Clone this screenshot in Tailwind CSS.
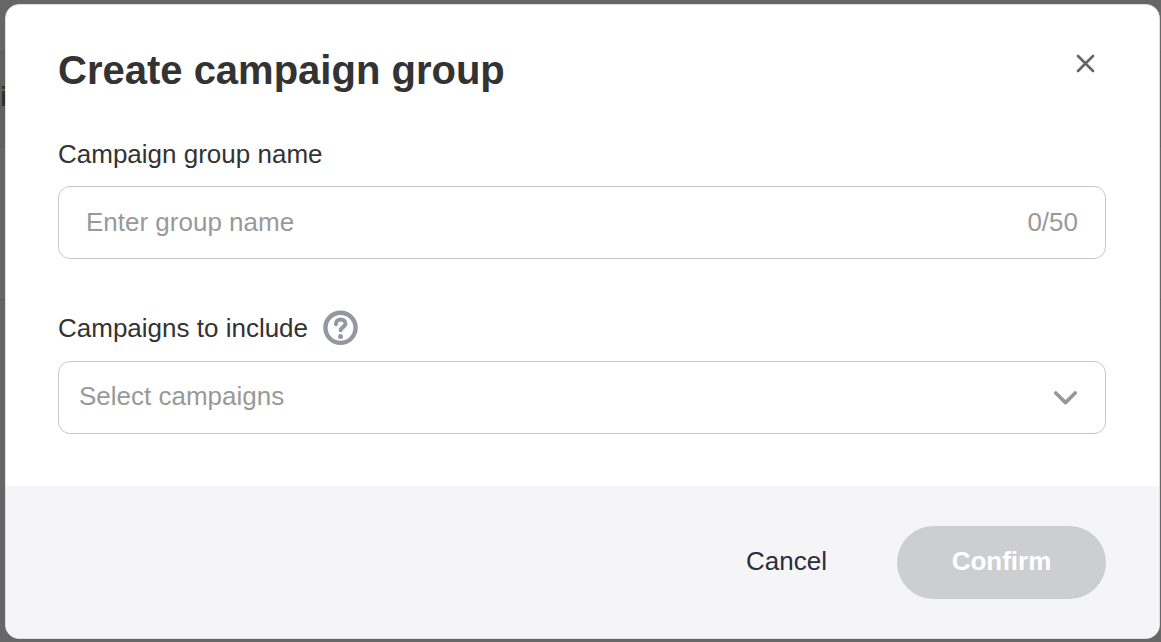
<!DOCTYPE html>
<html lang="en">
<head>
    <meta charset="UTF-8">
    <meta name="viewport" content="width=device-width, initial-scale=1.0">
    <title>Create campaign group</title>
    <script src="https://cdn.jsdelivr.net/npm/@tailwindcss/browser@4"></script>
</head>
<body class="relative isolate min-h-screen overflow-x-hidden bg-[#666666] pt-1 pr-px pb-1 pl-[5px] font-['Liberation_Sans',Arial,sans-serif] text-[26px] leading-8 text-[#333333]">

    <!-- dimmed page behind the dialog -->
    <div class="absolute inset-0 -z-10 overflow-hidden pt-[51px]" aria-hidden="true">
        <div class="flex h-24 items-center border-y border-[#5a5a5a] bg-[#626264] pb-1 text-[28px] font-bold text-[#33302a]">i</div>
        <div class="h-[153px] border-b border-[#5a5a5a]"></div>
    </div>

    <form role="dialog" aria-labelledby="title" class="overflow-hidden rounded-[14px] border border-[#dcdee0] bg-white">
        <div class="pt-[41px] pr-[53px] pb-[52px] pl-[52px]">
            <div class="flex items-start justify-between">
                <h1 id="title" class="text-[40px] leading-12 font-bold">Create campaign group</h1>
                <button type="button" aria-label="Close" class="flex h-9 w-10 items-center justify-center">
                    <svg class="size-5" viewBox="0 0 20 20" fill="none" stroke="#636363" stroke-width="2.6" stroke-linecap="round">
                        <path d="M2 2 17 17M17 2 2 17"/>
                    </svg>
                </button>
            </div>

            <label for="name" class="mt-11 block">Campaign group name</label>
            <div class="mt-4 flex h-[73px] items-center rounded-xl border border-[#c4c8ca] px-[27px] pb-0.5 text-[#999999]">
                <input id="name" type="text" maxlength="50" placeholder="Enter group name" class="min-w-0 flex-1 outline-none placeholder:text-[#999999]">
                <span id="count">0/50</span>
            </div>

            <div class="mt-[51px] flex h-9 items-center gap-[15px]">
                <label for="campaigns">Campaigns to include</label>
                <button type="button" aria-label="Help">
                    <svg class="size-9" viewBox="0 0 36 36" fill="none" stroke="#94979f" stroke-width="4.4" stroke-linecap="round" stroke-linejoin="round">
                        <circle cx="17.5" cy="17.8" r="15.1"/>
                        <path d="M12.9 14.2c0-3 2-4.8 4.8-4.8s4.8 1.8 4.8 4.4c0 3.4-4.8 3.4-4.8 6.4" stroke-width="4"/>
                        <circle cx="17.5" cy="26.4" r="2.5" fill="#94979f" stroke="none"/>
                    </svg>
                </button>
            </div>
            <div class="relative mt-[15px]">
                <select id="campaigns" class="block h-[73px] w-full appearance-none rounded-xl border border-[#c4c8ca] bg-white px-5 pb-1 text-[#999999]">
                    <option>Select campaigns</option>
                </select>
                <svg class="pointer-events-none absolute top-6 right-7 size-6" viewBox="0 0 24 24" fill="none" stroke="#94979f" stroke-width="3.6" stroke-linecap="round" stroke-linejoin="round">
                    <path d="M1.8 8 11.5 17.6 21.2 8"/>
                </svg>
            </div>
        </div>

        <div class="flex items-center justify-end gap-[70px] bg-[#f5f5f8] pt-10 pr-[53px] pb-[39px] pl-[52px]">
            <button type="button" class="h-[73px] pb-1 text-[#2b2d3b]">Cancel</button>
            <button type="submit" disabled class="h-[73px] w-[209px] rounded-full bg-[#cdced2] pb-1 font-bold text-white">Confirm</button>
        </div>
    </form>

    <script>
        const input = document.getElementById("name");

        input.addEventListener("input", () => {
            document.getElementById("count").innerText = input.value.length + "/50";
        });
    </script>
</body>
</html>
